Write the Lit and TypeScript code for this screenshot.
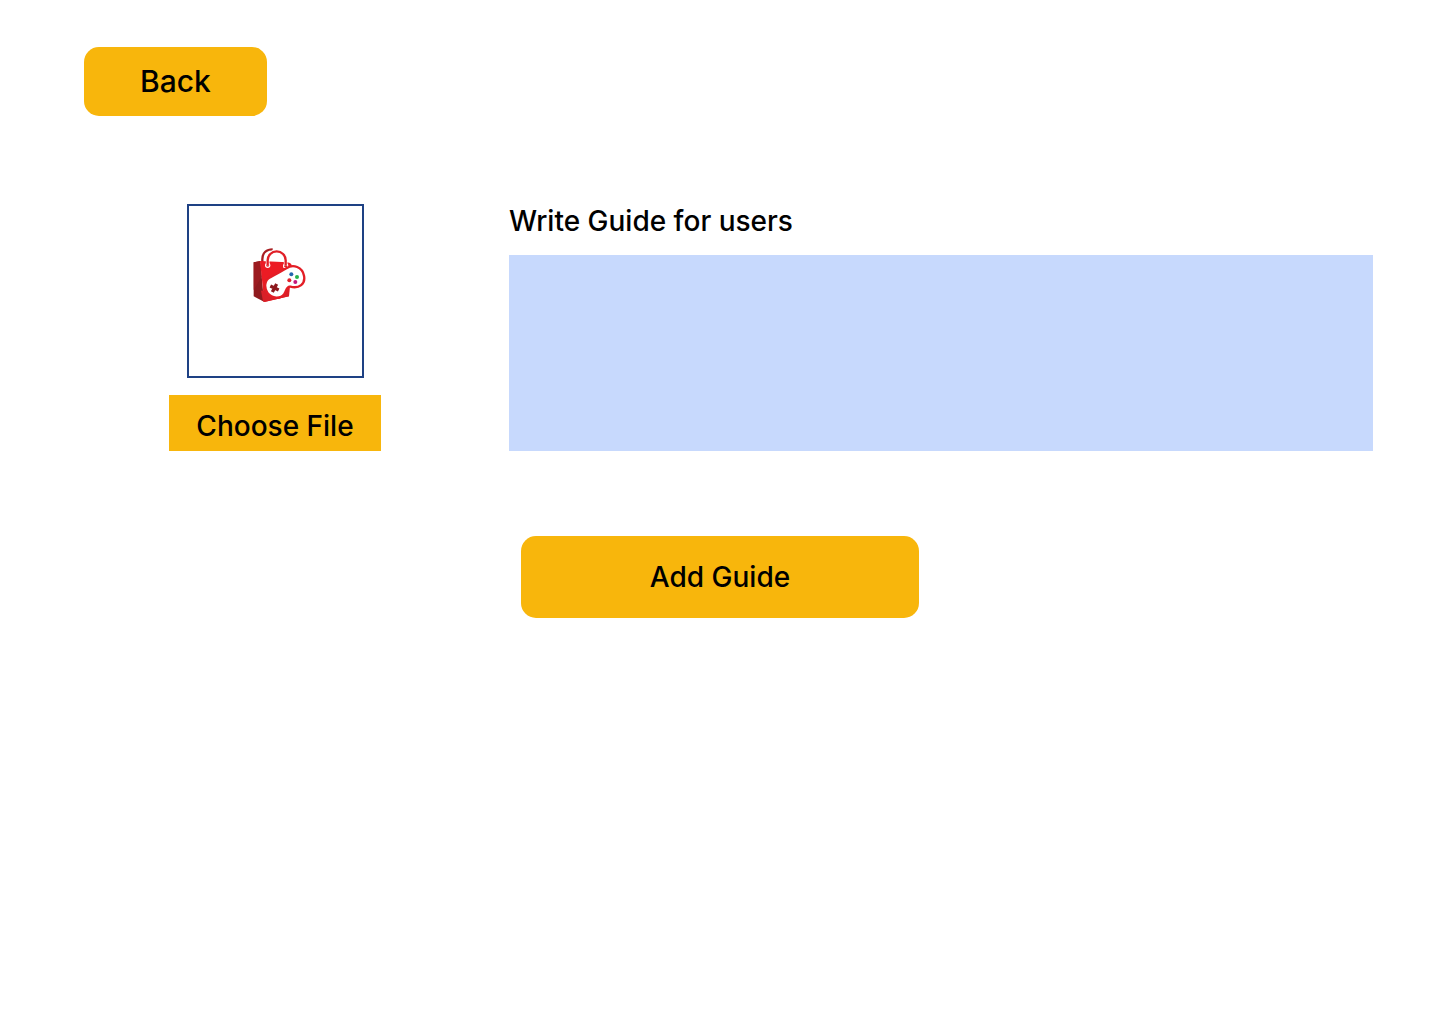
import { LitElement, html, css } from "lit";
import { customElement } from "lit/decorators.js";

@customElement("store-logo")
export class StoreLogo extends LitElement {
  static styles = css`
    :host {
      display: block;
    }
    .logo {
      display: block;
      width: 62px;
      height: 70px;
    }
  `;

  render() {
    return html`
      <svg class="logo" viewBox="-2 0 186 210" role="img" aria-label="Game store logo">
        <!-- rear handle -->
        <path d="M53 66V58C53 38 66 28 84 28" fill="none" stroke="#a81e22" stroke-width="7" />
        <!-- bag -->
        <path d="M27 67L47 63L58 185L27 169Z" fill="#8f1a1e" />
        <path d="M27 67L47 63L51 110L27 150Z" fill="#9c1b20" />
        <path d="M46 63L128 67Q141 68 142 80L133 169L59 186Z" fill="#ec1b24" />
        <path d="M49 152L133 142L133 169L59 186L55 184Z" fill="#d91f27" />
        <!-- front handle -->
        <circle cx="69" cy="76" r="8" fill="#fff" />
        <circle cx="123" cy="78" r="8" fill="#fff" />
        <circle cx="69" cy="75" r="5" fill="#e01f27" />
        <circle cx="123" cy="77" r="5" fill="#e01f27" />
        <path d="M69 76V61A27 27 0 0 1 123 61V77" fill="none" stroke="#fff" stroke-width="11" />
        <path d="M69 76V61A27 27 0 0 1 123 61V77" fill="none" stroke="#e01f27" stroke-width="7" />
        <!-- controller -->
        <path
          d="M74 113C91 104 111 94 125 85C146 71 173 81 178 107C183 131 164 147 137 140C126 137 126 151 119 162C107 178 82 176 69 160C57 143 60 121 74 113Z"
          fill="#fff"
          stroke="#e31e26"
          stroke-width="7"
          stroke-linejoin="round"
        />
        <path d="M77 138L102 150M96 132L83 156" stroke="#8c191d" stroke-width="10" />
        <circle cx="140" cy="103" r="6" fill="#2466ad" />
        <circle cx="157" cy="111" r="6" fill="#27b34b" />
        <circle cx="134" cy="121" r="6" fill="#e1222c" />
        <circle cx="152" cy="126" r="6" fill="#c3187c" />
      </svg>
    `;
  }
}

@customElement("app-root")
export class AppRoot extends LitElement {
  static styles = css`
    :host {
      display: block;
      min-height: 100vh;
      background: #fff;
      color: #000;
      font-family: Inter, "Liberation Sans", sans-serif;
      font-size: 28px;
      font-weight: 500;
      line-height: 34px;
    }
    * {
      box-sizing: border-box;
    }
    .top {
      padding: 47px 84px 0;
    }
    .button {
      border: 0;
      border-radius: 15px;
      background: #f8b60c;
      color: inherit;
      font: inherit;
      cursor: pointer;
    }
    .back {
      display: block;
      padding: 17px 56px 18px;
      font-size: 30px;
    }
    .fields {
      display: grid;
      grid-template-columns: 212px 1fr;
      column-gap: 128px;
      padding: 88px 67px 0 169px;
    }
    .picture,
    .guide {
      display: flex;
      flex-direction: column;
      gap: 17px;
    }
    .preview {
      display: flex;
      justify-content: center;
      align-self: center;
      width: 177px;
      height: 174px;
      padding-top: 34px;
      border: 2px solid #1e4184;
    }
    .choose {
      display: grid;
      place-items: center;
      height: 56px;
      padding-top: 6px;
      background: #f8b60c;
      cursor: pointer;
    }
    .choose > * {
      grid-area: 1 / 1;
    }
    .file {
      width: 100%;
      height: 34px;
      opacity: 0;
      cursor: pointer;
    }
    .text {
      display: block;
      width: 100%;
      height: 196px;
      padding: 16px;
      border: 0;
      border-radius: 0;
      background: #c7d9fd;
      color: inherit;
      font: inherit;
      resize: none;
    }
    .actions {
      display: flex;
      justify-content: center;
      padding: 85px 84px;
    }
    .add {
      width: 398px;
      padding: 24px;
    }
  `;

  render() {
    return html`
      <header class="top">
        <button class="button back" type="button">Back</button>
      </header>
      <form>
        <div class="fields">
          <div class="picture">
            <div class="preview"><store-logo></store-logo></div>
            <label class="choose" for="file">
              <span>Choose File</span>
              <input class="file" id="file" type="file" accept="image/*" />
            </label>
          </div>
          <div class="guide">
            <label for="guide">Write Guide for users</label>
            <textarea class="text" id="guide"></textarea>
          </div>
        </div>
        <div class="actions">
          <button class="button add" type="button">Add Guide</button>
        </div>
      </form>
    `;
  }
}
